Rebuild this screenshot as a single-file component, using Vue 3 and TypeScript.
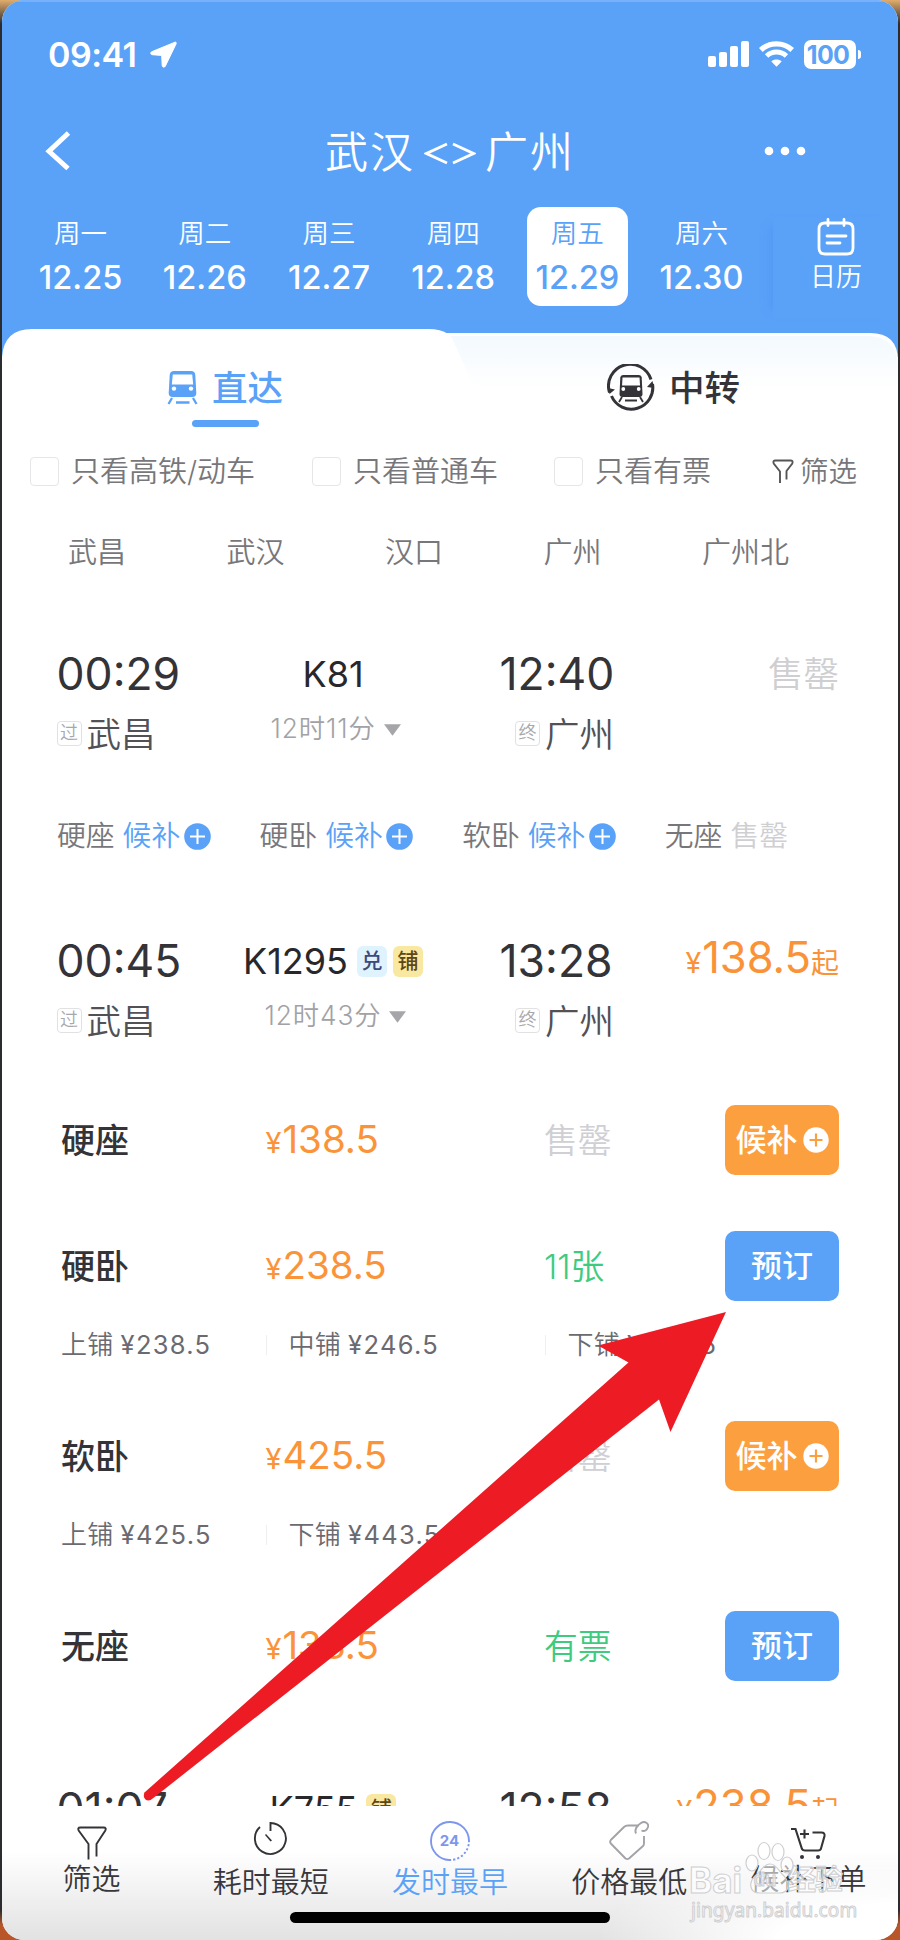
<script setup lang="ts">
interface Day { week: string; date: string; active?: boolean }
interface Tag { text: string; tone: string }
interface Seat { name: string; price: string; stock: string; tone: string; wait: boolean; berths: { name: string; price: string }[] }

const days: Day[] = [
  { week: '周一', date: '12.25' },
  { week: '周二', date: '12.26' },
  { week: '周三', date: '12.27' },
  { week: '周四', date: '12.28' },
  { week: '周五', date: '12.29', active: true },
  { week: '周六', date: '12.30' },
]
const filters: string[] = ['只看高铁/动车', '只看普通车', '只看有票']
const stations: string[] = ['武昌', '武汉', '汉口', '广州', '广州北']
const waits: { name: string; sold?: boolean }[] = [
  { name: '硬座' },
  { name: '硬卧' },
  { name: '软卧' },
  { name: '无座', sold: true },
]
const trains: { dep: string; arr: string; no: string; span: string; price: string; tags: Tag[] }[] = [
  { dep: '00:29', arr: '12:40', no: 'K81', span: '12时11分', price: '', tags: [] },
  { dep: '00:45', arr: '13:28', no: 'K1295', span: '12时43分', price: '138.5', tags: [{ text: '兑', tone: 'sky' }, { text: '铺', tone: 'sand' }] },
  { dep: '01:07', arr: '12:58', no: 'K755', span: '', price: '238.5', tags: [{ text: '铺', tone: 'sand' }] },
]
const seats: Seat[] = [
  { name: '硬座', price: '138.5', stock: '售罄', tone: 'none', wait: true, berths: [] },
  { name: '硬卧', price: '238.5', stock: '11张', tone: 'some', wait: false, berths: [{ name: '上铺', price: '¥238.5' }, { name: '中铺', price: '¥246.5' }, { name: '下铺', price: '¥255.5' }] },
  { name: '软卧', price: '425.5', stock: '售罄', tone: 'none', wait: true, berths: [{ name: '上铺', price: '¥425.5' }, { name: '下铺', price: '¥443.5' }] },
  { name: '无座', price: '138.5', stock: '有票', tone: 'some', wait: false, berths: [] },
]
</script>

<template>
  <div class="backdrop">
    <div class="phone">
      <header class="head">
        <div class="status">
          <span class="clock">09:41</span>
          <svg class="loc" width="27" height="27" viewBox="0 0 27 27"><path d="M25 1.2 1.6 10.8c-1.3.6-1 2.8.5 2.9l9.600.7.5 10.300c.1 1.600 2.400 2 3.100.5L26.200 2.600c.4-.9-.3-1.700-1.200-1.400z" fill="#fff" stroke="#fff" /></svg>
          <svg class="signal" width="41" height="26" viewBox="0 0 41 26" fill="#fff"><rect x="0" y="15" width="8" height="11" rx="2" /><rect x="11" y="11" width="8" height="15" rx="2" /><rect x="22" y="5" width="8" height="21" rx="2" /><rect x="33" y="0" width="8" height="26" rx="2" /></svg>
          <svg class="wifi" width="35" height="26" viewBox="0 0 35 26" fill="none" stroke="#fff"><path d="M1.800 9C10.800.8 24.200.8 33.200 9" stroke-width="5.400" /><path d="M7.600 15c5.700-5.200 14.100-5.200 19.800 0" stroke-width="5" /><path d="M12.300 20.400c2.900-2.400 7.500-2.400 10.400 0l-5.200 5.400z" fill="#fff" stroke="none" /></svg>
          <span class="battery">100</span><i class="nub"></i>
        </div>
        <div class="nav">
          <svg class="back" width="30" height="40" viewBox="0 0 30 40"><path d="M24.500 2 5 20.300 24 37.500" fill="none" stroke="#fff" stroke-width="5" /></svg>
          <h1 class="title"><span>武汉</span><svg width="52" height="24" viewBox="0 0 52 24" fill="none" stroke="#fff" stroke-width="2.800"><path d="M23 2 2.500 11.500 23 21M29 2l20.500 9.500L29 21" /></svg><span>广州</span></h1>
          <svg class="more" width="42" height="12" viewBox="0 0 42 12" fill="#fff"><circle cx="5" cy="6" r="4.300" /><circle cx="21" cy="6" r="4.300" /><circle cx="37" cy="6" r="4.300" /></svg>
        </div>
        <div class="dates">
          <div v-for="d in days" :key="d.date" class="day" :class="{ on: d.active }">
            <span class="week">{{ d.week }}</span><span class="date">{{ d.date }}</span>
          </div>
          <div class="cal">
            <svg width="38" height="38" viewBox="0 0 38 38" fill="none" stroke="#fff" stroke-width="2.800" stroke-linecap="round"><path d="M8 5h22q6 0 6 6v19q0 6-6 6H8q-6 0-6-6V11q0-6 6-6zM11 1.500v6M27 1.500v6M10 18h19M10 25h13" /></svg>
            <span>日历</span>
          </div>
        </div>
      </header>

      <section class="tabs">
        <svg class="tabbg" width="896" height="112" viewBox="0 0 896 112">
          <defs><linearGradient id="shade" x1="0" y1="0" x2="0" y2="1"><stop offset="0" stop-color="#f3f9fe" /><stop offset=".5" stop-color="#fff" /></linearGradient></defs>
          <path d="M400 4h468q28 0 28 28v80H400z" fill="#fff" />
          <path d="M400 7h465q28 0 31 28v77H400z" fill="url(#shade)" />
          <path d="M0 112V28Q2 0 30 0h396q13 0 20 5 3 2 5 6l20 45q6 12 20 12v44z" fill="#fff" />
        </svg>
        <div class="tab direct">
          <div class="lab">
            <svg width="31" height="36" viewBox="0 0 31 36"><path d="M7 1h17q4 0 4.300 4l1 18q0 4-4 4H5.700q-4 0-4-4l1-18Q3 1 7 1z" fill="#5aa2f8" /><path d="M5.800 4.500h19.400l1 10H4.800z" fill="#fff" /><circle cx="7" cy="18.600" r="2.200" fill="#fff" /><circle cx="24" cy="18.600" r="2.200" fill="#fff" /><path d="m5 28-3.500 6M26 28l3.500 6M9 32.500h13.500" stroke="#5aa2f8" stroke-width="2.300" /></svg>
            <b>直达</b>
          </div>
          <i class="bar"></i>
        </div>
        <div class="tab change">
          <div class="lab">
            <svg width="48" height="48" viewBox="0 0 48 48" fill="none" stroke="#333338"><path d="M2.500 28.500A21.500 21.500 0 0144 15.500M45.500 20A21.500 21.500 0 014.500 32" stroke-width="3" /><path d="m1 24 1.500 6L8 25.500zM47 24l-1.500-7-5.500 6z" fill="#333338" stroke="none" /><path d="M16 11h16q2.500 0 2.700 2.500L35.500 30q0 3-3 3h-17q-3 0-3-3l.8-16.500Q13.500 11 16 11z" fill="#333338" stroke="none" /><path d="M15.500 13.500h17l.5 8H15z" fill="#fff" stroke="none" /><circle cx="16.300" cy="25" r="1.900" fill="#fff" stroke="none" /><circle cx="31.700" cy="25" r="1.900" fill="#fff" stroke="none" /><path d="m15 33-3 5M33 33l3 5M18 36.500h12" stroke-width="1.800" /></svg>
            <b>中转</b>
          </div>
        </div>
      </section>

      <section class="filters">
        <label v-for="f in filters" :key="f"><i class="box"></i><span>{{ f }}</span></label>
        <span class="pick"><svg width="22" height="25" viewBox="0 0 22 25" fill="none" stroke="#555" stroke-width="1.900"><path d="M8 24V12.500L1.700 4.500Q.5 1.500 3.500 1.500h15q3 0 1.800 3L14.500 12v8.500" /></svg><span>筛选</span></span>
      </section>
      <section class="stations"><span v-for="s in stations" :key="s">{{ s }}</span></section>

      <main class="list">
        <template v-for="(t, n) in trains" :key="t.no">
          <article class="train" :class="'t' + n">
            <div class="line">
              <span class="time">{{ t.dep }}</span>
              <span class="no">{{ t.no }}<em v-for="g in t.tags" :key="g.text" :class="g.tone">{{ g.text }}</em></span>
              <span class="time arr">{{ t.arr }}</span>
              <span v-if="t.price" class="from"><small>¥</small>{{ t.price }}<sub>起</sub></span>
              <span v-else class="sold">售罄</span>
            </div>
            <div v-if="t.span" class="line place">
              <span class="stop"><i>过</i><span>武昌</span></span>
              <span class="span">{{ t.span }}<svg width="17" height="12" viewBox="0 0 18 12"><path d="M0 0h18L9 12z" fill="#a6a6aa" /></svg></span>
              <span class="stop end"><i>终</i><span>广州</span></span>
            </div>
          </article>
          <div v-if="n === 0" class="waits">
            <span v-for="w in waits" :key="w.name"><span>{{ w.name }}</span>
              <span v-if="w.sold" class="gone">售罄</span>
              <span v-else class="wait">候补<svg width="27" height="27" viewBox="0 0 27 27"><circle cx="13.500" cy="13.500" r="13.300" fill="#5aa2f8" /><path d="M13.500 6v15M6 13.500h15" stroke="#fff" stroke-width="2" /></svg></span>
            </span>
          </div>
          <div v-if="n === 1" class="seats">
            <div v-for="s in seats" :key="s.name" class="seat">
              <div class="row">
                <span class="name">{{ s.name }}</span>
                <span class="price"><small>¥</small>{{ s.price }}</span>
                <span class="stock" :class="s.tone">{{ s.stock }}</span>
                <button v-if="s.wait" class="btn amber">候补<svg width="26" height="26" viewBox="0 0 26 26"><circle cx="13" cy="13" r="12.700" fill="#fff" /><path d="M13 6.500v13M6.500 13h13" stroke="#fb9f3f" stroke-width="2.200" /></svg></button>
                <button v-else class="btn">预订</button>
              </div>
              <div v-if="s.berths.length" class="berths">
                <span v-for="b in s.berths" :key="b.name"><u>{{ b.name }}</u>{{ b.price }}</span>
              </div>
            </div>
          </div>
        </template>
      </main>

      <footer class="foot">
        <div class="item a"><svg width="30" height="40" viewBox="0 0 30 40" fill="none" stroke="#333338" stroke-width="1.900"><path d="M11.500 37.500V22L2 9Q0 5.500 3.500 5.500h23Q30 5.500 28 9l-8.500 13v12.500" /></svg><span>筛选</span></div>
        <div class="item b"><svg width="36" height="40" viewBox="0 0 36 40" fill="none" stroke="#333338" stroke-width="1.900"><path d="M17.500 10V2A15.500 15.500 0 117 6" /><path d="m12 14 1-1 6 6.500-1.500 1z" fill="#333338" stroke="none" /></svg><span>耗时最短</span></div>
        <div class="item c"><svg width="42" height="42" viewBox="0 0 42 42" fill="none" stroke="#7e97ee" stroke-width="1.900"><path d="M40 21A19 19 0 1020 40" /><path d="M20 40A19 19 0 0040 21" stroke-dasharray="2.200 2" /><text x="20.500" y="25.500" text-anchor="middle" fill="#7e97ee" stroke="none">24</text></svg><span>发时最早</span></div>
        <div class="item d"><svg width="40" height="42" viewBox="0 0 40 42" fill="none" stroke="#a2a2a8" stroke-width="1.900" stroke-linejoin="round"><path d="M35 16v7.500q0 1.500-1 2.500L20 38.500q-1.700 1.200-3.500 0L1.800 23.500q-1.300-1.800 0-3.500L15 7q1.500-1.500 4-1.500h10.500" /><path d="M27 13.500c-2-4.500 1.500-8 5-10.500 4-2.500 8 .5 7 4-1 3-3.500 5-6.500 3.500" /></svg><span>价格最低</span></div>
        <div class="item e"><svg width="36" height="40" viewBox="0 0 36 40" fill="none" stroke="#333338" stroke-width="2.100"><path d="M1 7h4.500l6.500 20q.7 1.500 3 1.500h13q2.500 0 3-2L34.500 14q.5-3.500-3-3.500h-9M14.500 7.500v9M10 12h9" /><circle cx="12" cy="35" r="2" fill="#333338" stroke="none" /><circle cx="28" cy="35" r="2" fill="#333338" stroke="none" /></svg><span>候补下单</span></div>
        <i class="home"></i>
        <div class="mark">
          <svg width="50" height="56" viewBox="0 0 50 56" fill="#ffffff90" stroke="#cfcfd2" stroke-width="1.200"><ellipse cx="7" cy="22" rx="6" ry="8" /><ellipse cx="19" cy="10" rx="6" ry="8.500" /><ellipse cx="33" cy="11" rx="6" ry="8.500" /><ellipse cx="42" cy="24" rx="6" ry="8" /><path d="M25 23c6 0 8 6 12 10 8 7 9 19-3 19-5 0-14 0-19 0-11 0-12-11-4-18 5-4 8-11 14-11z" /></svg>
          <div class="brand"><span>Bai</span><span class="du">du</span><span>经验</span></div>
          <div class="url">jingyan.baidu.com</div>
        </div>
      </footer>

      <svg class="arrow" width="896" height="1940" viewBox="2 0 896 1940"><path d="M726 1312 598 1345.500l30.500 17L144.500 1792.500q-2 5 1.500 7.500 4 1.500 8-2.500L659 1399.500l11.500 32.500z" fill="#ed1c24" /></svg>
    </div>
  </div>
</template>

<style>
body { margin: 0; }
</style>
<style scoped>
.backdrop { width: 900px; height: 1940px; overflow: hidden; background: linear-gradient(#e0ac6c, #2b2c2e 24px, #2b2c2e 1910px, #b8562a 1925px); font-family: Inter, "Noto Sans CJK SC", sans-serif; }
.phone { position: relative; box-sizing: border-box; margin: 0 2px; height: 1940px; overflow: hidden; border-radius: 22px; background: #fff; color: #333338; }
.phone svg { flex: none; display: block; }
i, em, u { font-style: normal; text-decoration: none; }

.head { height: 357px; margin-bottom: -28px; background: #5aa2f8; border-top: 2px solid #78b1fb; box-sizing: border-box; color: #fff; }
.status { height: 104px; box-sizing: border-box; padding: 0 37px 0 46px; display: flex; align-items: center; }
.clock { font-size: 34px; font-weight: 600; width: 101px; letter-spacing: -.5px; }
.loc { margin-left: 1px; }
.signal { margin-left: auto; margin-right: 10px; }
.wifi { margin-right: 10px; }
.battery { width: 52px; height: 29px; border-radius: 7px; background: #fff; color: #5aa2f8; font-size: 25px; font-weight: 700; line-height: 30px; text-align: center; letter-spacing: -.7px; text-indent: -4px; }
.nub { width: 3px; height: 9px; margin-left: 2px; border-radius: 0 4px 4px 0; background: #fff; }
.nav { height: 90px; display: grid; grid-template-columns: 250px 396px 1fr; align-items: center; }
.back { margin-left: 41.500px; }
.title { margin: -4px 0 0; font-size: 43px; font-weight: 350; display: flex; align-items: center; justify-content: center; }
.title span { letter-spacing: 2px; }
.title svg { margin: 9px 9px 0 9px; }
.more { margin-left: 116px; }
.dates { display: flex; padding: 11px 0 0 16.500px; }
.day { flex: none; width: 101px; height: 99px; margin: 0 11.600px; border-radius: 14px; text-align: center; }
.day.on { background: #fff; color: #5aa2f8; }
.week { display: block; padding-top: 8px; font-size: 26.500px; line-height: 36px; font-weight: 350; }
.date { display: block; font-size: 32.500px; line-height: 36px; padding-top: 9px; font-weight: 500; }
.cal { flex: none; box-sizing: border-box; display: flex; flex-direction: column; align-items: center; width: 126px; height: 101px; margin: 10px 0 0 9px; padding: 1px 0 0 1px; box-shadow: -10px 0 10px -8px #5297f5; font-size: 26px; line-height: 36px; font-weight: 350; gap: 3px; }

.tabs { position: relative; height: 112px; display: flex; }
.tabbg { position: absolute; left: 0; top: 0; }
.tab { position: relative; padding-top: 34px; }
.direct { width: 446px; color: #5aa2f8; }
.lab { display: flex; align-items: center; height: 50px; font-size: 35.500px; line-height: 50px; }
.lab b { font-weight: 500; margin-top: 1px; }
.direct .lab { padding-left: 165px; gap: 14px; }
.change .lab { padding-left: 159px; gap: 14px; }
.bar { display: block; width: 67px; height: 7px; border-radius: 4px; background: #5aa2f8; margin: 7px 0 0 190px; }

.filters { height: 60px; padding-left: 28px; display: grid; grid-template-columns: 282px 242px 218px 1fr; align-items: center; font-size: 29px; line-height: 40px; font-weight: 350; color: #77777b; }
.filters label, .pick { display: flex; align-items: center; white-space: nowrap; }
.filters label { gap: 12px; }
.filters label span, .pick span { margin-top: 1px; }
.box { width: 27px; height: 27px; border: 1.500px solid #e6e6e8; border-radius: 4px; }
.pick { gap: 6px; font-size: 28.500px; }
.stations { height: 103px; padding-left: 66px; display: grid; grid-template-columns: repeat(5, 158.500px); align-items: center; font-size: 29px; line-height: 40px; font-weight: 350; color: #77777b; }

.list { height: 1202px; overflow: hidden; }
.train.t0 { padding-top: 40px; }
.train.t1 { padding-top: 66px; }
.train.t2 { padding-top: 98px; }
.line { height: 60px; display: grid; grid-template-columns: 54.500px 166px 216px 219.500px 1fr; align-items: center; white-space: nowrap; }
.time { grid-column: 2; font-size: 44.500px; font-weight: 400; }
.time.arr { grid-column: 4; padding-left: 61px; }
.no { grid-column: 3; display: flex; align-items: center; justify-content: center; font-size: 36px; line-height: 40px; color: #28282c; padding-left: 5px; }
.no em { width: 30px; height: 31px; border-radius: 6px; font-size: 21px; line-height: 30px; text-align: center; font-weight: 500; margin-left: 6px; }
.no em:first-of-type { margin-left: 9px; }
.sky { background: #def3fd; color: #3d4a7c; }
.sand { background: #f9e8a2; color: #5d4714; }
.sold, .from { grid-column: 5; justify-self: end; margin-right: 59px; }
.sold { font-size: 35.500px; font-weight: 350; color: #cfcfd2; padding-bottom: 6px; }
.from { font-size: 43.500px; font-weight: 400; color: #fa9338; padding-bottom: 3px; line-height: 50px; }
.from small { font-size: 28.500px; margin-right: 1px; }
.from sub { font-size: 28px; vertical-align: baseline; }
.place { height: 59px; line-height: 40px; }
.stop { grid-column: 2; display: flex; align-items: center; font-size: 34.500px; font-weight: 350; color: #515156; }
.stop.end { grid-column: 4; padding-left: 76.500px; }
.stop i { width: 23px; height: 23px; border: 1.500px solid #e1e1e4; border-radius: 4px; font-size: 18px; line-height: 22px; text-align: center; color: #a8a8ac; margin-right: 5px; }
.stop span { margin-top: 2px; }
.span { grid-column: 3; display: flex; align-items: center; justify-content: center; gap: 8px; font-size: 26.300px; letter-spacing: .9px; font-weight: 350; color: #a2a2a6; padding-bottom: 9px; padding-left: 10px; }
.span svg { margin-top: 2px; }
.waits { height: 60px; margin-top: 43px; margin-bottom: -1px; padding-left: 55px; display: grid; grid-template-columns: repeat(4, 202.600px); align-items: center; font-size: 28.800px; line-height: 40px; font-weight: 350; color: #77777b; }
.waits > span, .wait { display: flex; align-items: center; white-space: nowrap; }
.waits > span { gap: 8px; }
.wait { color: #5aa2f8; gap: 3.500px; }
.gone { color: #cfcfd2; }

.seats { margin-top: 55px; }
.seat + .seat { margin-top: 56px; }
.seat:has(.berths) + .seat { margin-top: 54px; }
.row { height: 70px; display: grid; grid-template-columns: 204.500px 278.500px 181px 114px; padding-left: 59px; align-items: center; line-height: 50px; }
.name { font-size: 34px; font-weight: 500; margin-top: 2px; }
.price { font-size: 38.500px; font-weight: 400; color: #fb9338; margin-top: 2px; }
.price small { font-size: 29px; margin-right: 1px; }
.stock { font-size: 33.800px; font-weight: 350; margin-top: 2px; }
.none { color: #cfcfd4; }
.some { color: #3ecb80; }
.btn { border: 0; height: 70px; border-radius: 10px; padding: 0; display: flex; align-items: center; justify-content: center; gap: 5px; background: #5aa2f8; color: #fff; font: 500 31px/40px Inter, "Noto Sans CJK SC", sans-serif; }
.amber { background: #fb9f3f; }
.berths { margin-top: 22px; height: 44px; padding-left: 59px; display: grid; grid-template-columns: 204.500px 279px 200px; align-items: center; font-size: 25.500px; letter-spacing: 1.300px; color: #6a6a70; }
.berths span { white-space: nowrap; line-height: 20px; }
.berths u { font-size: 26px; font-weight: 350; letter-spacing: .3px; margin-right: 7px; }
.berths span + span { border-left: 1.500px solid #eeeef3; padding-left: 22px; }

.foot { position: relative; display: flex; height: 134px; background: radial-gradient(ellipse 300px 90px at 100% 100%, #fff 40%, #fff0), linear-gradient(#fff 45px, #e2e2e2); }
.item { width: 179.300px; display: flex; flex-direction: column; align-items: center; font-size: 29px; line-height: 40px; font-weight: 350; white-space: nowrap; }
.item span { color: #38383c; }
.item svg { margin-top: 14px; height: 42px; }
.item.c span { color: #5aa2f8; }
.item.a span, .item.e span { margin-top: -3.500px; }
.item.b span, .item.c span, .item.d span { margin-top: 1px; }
.item.a svg, .item.e svg { margin-top: 15px; }
.item text { font: 700 15px Inter, sans-serif; }
.home { position: absolute; left: 288px; top: 106px; width: 320px; height: 11px; border-radius: 6px; background: #000; }
.mark { position: absolute; left: 687px; top: 35px; width: 170px; height: 90px; color: #ffffffb0; -webkit-text-stroke: 1px #cfcfd2; }
.mark svg { position: absolute; left: 56px; top: 0; }
.brand { position: absolute; left: 0; top: 19px; display: flex; align-items: center; font-size: 35px; line-height: 40px; font-weight: 700; }
.brand span:last-child { font-size: 28px; letter-spacing: -1px; }
.brand .du { font-size: 19px; width: 46px; text-align: center; font-weight: 500; }
.url { position: absolute; left: 2px; top: 54px; font: 400 19px/30px "Noto Sans", sans-serif; letter-spacing: .1px; }
.arrow { position: absolute; left: 0; top: 0; }
</style>
